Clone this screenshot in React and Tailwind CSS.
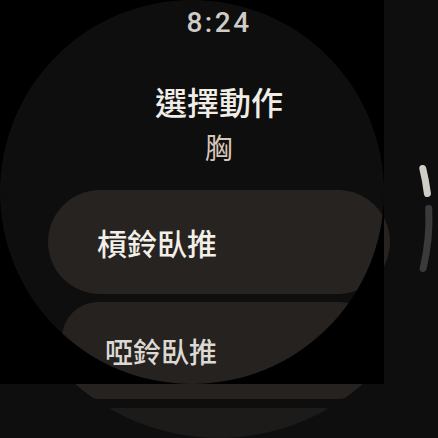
/**
 * App.jsx — Wear OS exercise picker (round screen, chest exercises).
 */
const exercises = [
  { id: 'barbell', name: '槓鈴臥推' },
  { id: 'dumbbell', name: '啞鈴臥推' },
  { id: 'incline', name: '上斜槓鈴臥推' },
];

function PositionIndicator() {
  return (
    <svg
      className="absolute left-0 top-0 pointer-events-none"
      width="438"
      height="438"
      viewBox="0 0 438 438"
    >
      <path
        d="M 428.7 208.5 A 210 210 0 0 1 423.1 268.5"
        fill="none"
        stroke="#3a3a3a"
        strokeWidth="7"
        strokeLinecap="round"
      />
      <path
        d="M 422.8 168.5 A 210 210 0 0 1 427.4 193.5"
        fill="none"
        stroke="#d0ccc6"
        strokeWidth="7"
        strokeLinecap="round"
      />
    </svg>
  );
}

export default function App() {
  const cjk = { fontFamily: '"Noto Sans CJK TC", "Noto Sans", sans-serif' };

  return (
    <div className="relative w-[438px] h-[438px] overflow-hidden bg-[#0e0e0e]">
      {/* round screen clip */}
      <div className="w-[438px] h-[438px] rounded-full overflow-hidden flex flex-col items-center">
        <div
          className="mt-[9px] h-[28px] text-[28px] leading-[28px] font-medium tracking-[2.5px] text-[#cfcbc6]"
          style={{ fontFamily: 'Roboto, "Liberation Sans", sans-serif' }}
        >
          8:24
        </div>

        <div className="mt-[48px] h-[32px] text-[32px] leading-[32px] font-medium text-[#f0ece6]" style={cjk}>
          選擇動作
        </div>
        <div className="mt-[16px] h-[28px] text-[28px] leading-[28px] text-[#d9c6bb]" style={cjk}>
          胸
        </div>

        <div className="mt-[29px] flex flex-col items-center gap-[8px]" style={cjk}>
          <button
            type="button"
            className="w-[342px] h-[104px] shrink-0 rounded-full bg-[#262321] pl-[49px] text-left text-[30px] leading-none font-medium text-[#f2eee8]"
          >
            {exercises[0].name}
          </button>
          <button
            type="button"
            className="w-[314px] h-[97px] shrink-0 rounded-[36px] bg-[#252220] pl-[43px] text-left text-[28px] leading-none font-medium text-[#dcd8d2]"
          >
            {exercises[1].name}
          </button>
          <button
            type="button"
            className="mt-[1px] w-[270px] h-[76px] shrink-0 rounded-[30px] bg-[#1c1b1a] pl-[40px] pt-[10px] text-left text-[22px] leading-none font-medium text-[#777470]"
          >
            {exercises[2].name}
          </button>
        </div>
      </div>

      {/* bezel mask */}
      <div className="absolute left-0 top-0 w-[384px] h-[384px] overflow-hidden pointer-events-none">
        <div className="w-full h-full rounded-full shadow-[0_0_0_300px_#000]" />
      </div>

      <PositionIndicator />
    </div>
  );
}
